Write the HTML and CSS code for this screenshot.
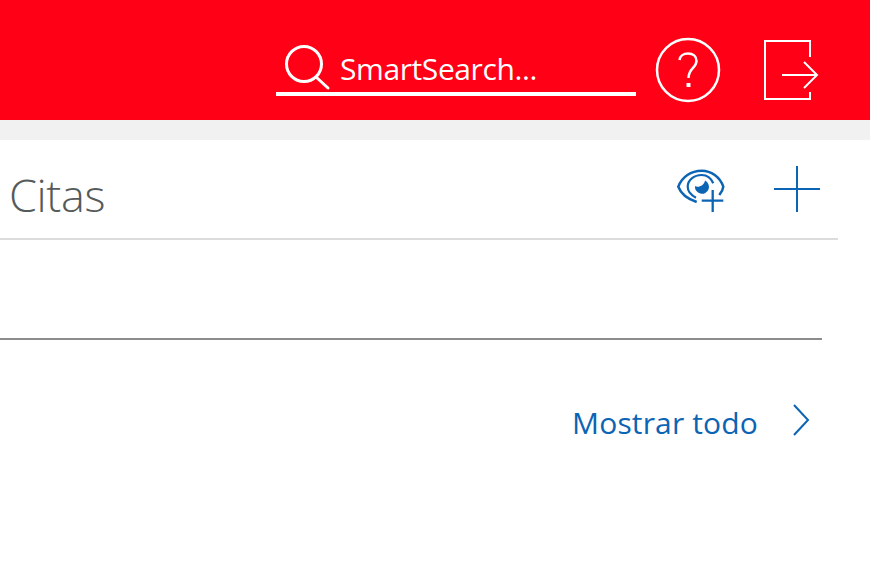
FILE: index.html
```html
<!DOCTYPE html>
<html lang="es">
<head>
<meta charset="utf-8">
<title>Citas</title>
<link rel="stylesheet" href="styles.css">
</head>
<body>
<header class="topbar">
  <div class="search">
    <svg class="search-icon" width="48" height="48" viewBox="0 0 48 48" fill="none" stroke="#fff" stroke-width="3">
      <circle cx="20" cy="20" r="17.500"/>
      <path d="M32 33 L44 44" stroke-linecap="round"/>
    </svg>
    <span class="search-text">SmartSearch...</span>
  </div>
  <svg class="help" width="66" height="66" viewBox="0 0 66 66" fill="none" stroke="#fff">
    <circle cx="33" cy="33" r="31" stroke-width="2.5"/>
    <path d="M24.500 23 C25 19 28.500 16.500 33 16.500 C38 16.500 41.500 19.500 41.500 24 C41.500 31 33.500 31 33.500 41" stroke-width="2.500"/>
    <rect x="31.500" y="46" width="4" height="4" fill="#fff" stroke="none"/>
  </svg>
  <svg class="logout" width="56" height="62" viewBox="0 0 56 62" fill="none" stroke="#fff" stroke-width="2">
    <path d="M46 18 V2 H1 V60 H46 V53"/>
    <path d="M18 36 H53 M40 23 L53 36 L40 49"/>
  </svg>
</header>
<div class="band"></div>
<main class="panel">
  <div class="title-row">
    <h1 class="title">Citas</h1>
    <div class="actions">
      <svg class="eye" width="50" height="46" viewBox="0 0 50 46" fill="none" stroke="#0c64b4">
        <path d="M20.700 34 C12 31 5 26 2.300 18.700 C6 9 15 2.700 25.700 2.700 C35 2.700 44 9 47.300 18.700 C47 22 45 25 43.300 27" stroke-width="2.500"/>
        <path d="M20 29.700 C15 27 11.700 23 11.700 18.700 C11.700 12 18 7 25.700 7 C31 7 35 10 37.300 15.300" stroke-width="2.200"/>
        <path d="M29 12.500 A7 7 0 1 1 19 18 C22 20 28 18 29 12.500 Z" fill="#0c64b4" stroke="none"/>
        <path d="M36.700 22 V44 M25.700 32.700 H47.300" stroke-width="2.300"/>
      </svg>
      <svg class="plus" width="46" height="46" viewBox="0 0 46 46" fill="none" stroke="#0c64b4" stroke-width="2">
        <path d="M23 0 V46 M0 23 H46"/>
      </svg>
    </div>
  </div>
  <div class="content-row"></div>
  <div class="footer-row">
    <a class="show-all">Mostrar todo</a>
    <svg class="chevron" width="18" height="32" viewBox="0 0 18 32" fill="none" stroke="#0c64b4" stroke-width="2">
      <path d="M2 1 L16 16 L2 31"/>
    </svg>
  </div>
</main>
</body>
</html>
```
FILE: styles.css
```css
html, body {
  margin: 0;
  height: 100%;
  overflow: hidden;
  background: #fff;
  font-family: "Open Sans", "Noto Sans", sans-serif;
}
.topbar {
  height: 120px;
  background: #ff0016;
  display: flex;
  justify-content: flex-end;
  align-items: flex-start;
  padding-right: 50px;
  box-sizing: border-box;
}
.band {
  height: 20px;
  background: #f1f1f1;
}
.search {
  width: 360px;
  height: 96px;
  box-sizing: border-box;
  border-bottom: 4px solid #fff;
  display: flex;
  align-items: flex-start;
  padding: 44px 0 0 8px;
  margin-right: 19px;
  color: #fff;
}
.search-icon { flex: none; }
.search-text {
  font-size: 30px;
  line-height: 50px;
  margin-left: 8px;
  letter-spacing: -0.4px;
}
.help { margin-top: 37px; margin-right: 43px; }
.logout { margin-top: 39px; }
.title-row {
  width: 838px;
  height: 100px;
  box-sizing: border-box;
  border-bottom: 2px solid #dcdcdc;
  display: flex;
  justify-content: space-between;
  align-items: flex-start;
  padding: 25px 18px 0 9px;
}
.title {
  margin: 0;
  font-size: 45px;
  font-weight: 300;
  line-height: 60px;
  color: #555a5a;
  letter-spacing: -0.4px;
}
.actions { display: flex; gap: 48px; align-items: flex-start; }
.eye { margin-top: 3px; }
.plus { margin-top: 1px; }
.content-row {
  width: 822px;
  height: 100px;
  box-sizing: border-box;
  border-bottom: 2px solid #8c8c8c;
}
.footer-row {
  width: 810px;
  display: flex;
  justify-content: flex-end;
  align-items: center;
  gap: 34px;
  margin-top: 56px;
}
.chevron { margin-bottom: 4px; }
.show-all {
  font-size: 30px;
  line-height: 48px;
  padding-top: 3px;
  color: #0c64b4;
  letter-spacing: 0.15px;
}
```
